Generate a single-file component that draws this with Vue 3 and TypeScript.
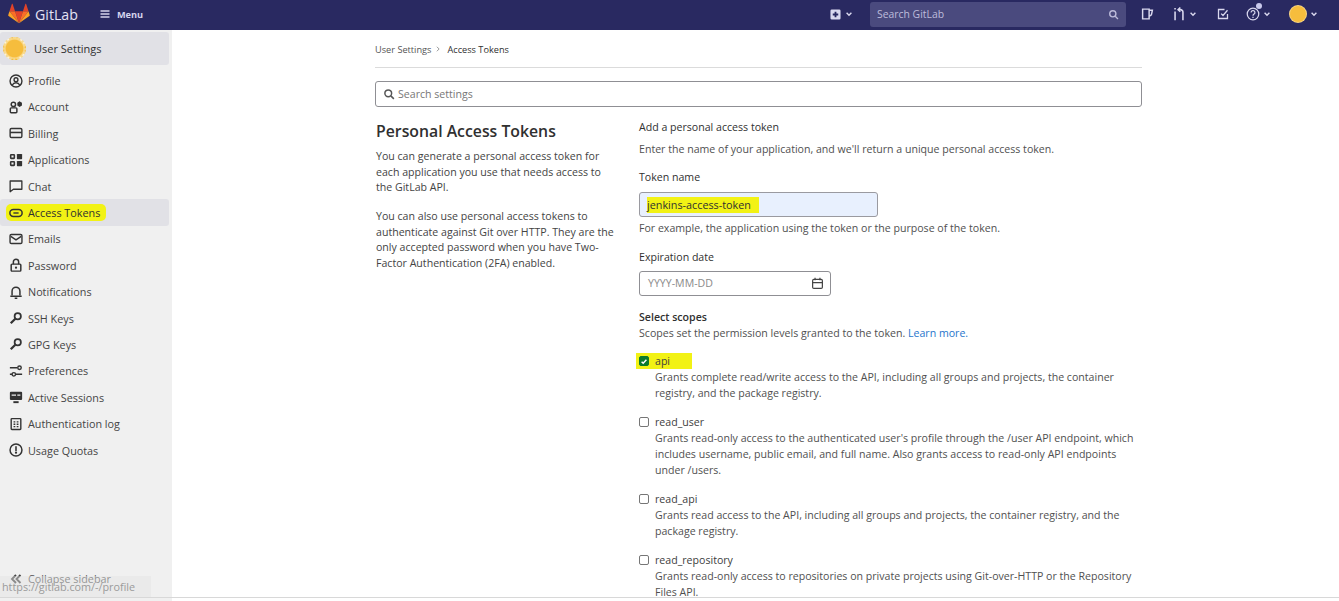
<template>
  <div class="page">
    <header class="topbar">
      <div class="brand">
        <svg class="tanuki" viewBox="0 0 24 24" width="22" height="22">
          <path fill="#e24329" d="M12 22 L16.3 9 H7.7 Z" />
          <path fill="#fc6d26" d="M12 22 L7.7 9 H1.6 Z" />
          <path fill="#fca326" d="M1.6 9 L0.3 13 C0.2 13.5 0.3 14 0.7 14.3 L12 22 Z" />
          <path fill="#e24329" d="M1.6 9 H7.7 L5.1 1.2 C4.9 .8 4.4 .8 4.2 1.2 Z" />
          <path fill="#fc6d26" d="M12 22 L16.3 9 H22.4 Z" />
          <path fill="#fca326" d="M22.4 9 L23.7 13 C23.8 13.5 23.7 14 23.3 14.3 L12 22 Z" />
          <path fill="#e24329" d="M22.4 9 H16.3 L18.9 1.2 C19.1 .8 19.6 .8 19.8 1.2 Z" />
        </svg>
        <span class="brand-name">GitLab</span>
        <button type="button" class="menu-btn">
          <svg viewBox="0 0 16 16" width="12" height="12" fill="#d5d4ec"><path d="M2 3h12v2H2zM2 7h12v2H2zM2 11h12v2H2z" /></svg>
          <span>Menu</span>
        </button>
      </div>
      <div class="top-right">
        <span class="top-icon new-btn">
          <svg viewBox="0 0 12 12" width="11" height="11"><path fill="#d9d8ee" fill-rule="evenodd" d="M2 0.5h8a1.5 1.5 0 0 1 1.5 1.5v8a1.5 1.5 0 0 1-1.5 1.5H2A1.5 1.5 0 0 1 .5 10V2A1.5 1.5 0 0 1 2 .5zM5 3v2H3v2h2v2h2V7h2V5H7V3z" /></svg>
          <svg class="chev" viewBox="0 0 10 10" width="8" height="8"><path d="M2 3.5l3 3 3-3" /></svg>
        </span>
        <div class="top-search">
          <span>Search GitLab</span>
          <svg viewBox="0 0 16 16" width="11" height="11" fill="none" stroke="#bdbcdb" stroke-width="2"><circle cx="7" cy="7" r="4.5" /><path d="M10.5 10.5L14.5 14.5" /></svg>
        </div>
        <div class="top-actions">
          <svg class="a1" viewBox="0 0 16 16" width="13" height="14" fill="none" stroke="#d9d8ee" stroke-width="1.8"><path d="M2 2h8v12H2zM10 3.5h4l-1.2 5.5L10 11" /></svg>
          <span class="a2">
            <svg viewBox="0 0 16 16" width="14" height="14" fill="none" stroke="#d9d8ee" stroke-width="1.8"><path d="M3.5 5v10" /><path d="M3.5 1v1.8" /><path d="M12.5 15V6a3 3 0 0 0-3-3H7.5" /><path d="M9.5 .6L7 3l2.5 2.4" /></svg>
            <svg class="chev" viewBox="0 0 10 10" width="8" height="8"><path d="M2 3.5l3 3 3-3" /></svg>
          </span>
          <svg class="a3" viewBox="0 0 16 16" width="12" height="12" fill="none" stroke="#d9d8ee" stroke-width="1.7"><path d="M14 8v6H2V2h8M5.5 7.5L8 10l6-7" /></svg>
          <span class="a4">
            <svg viewBox="0 0 16 16" width="14" height="14" fill="none" stroke="#d9d8ee" stroke-width="1.4"><circle cx="8" cy="8" r="6.6" /><path d="M5.8 6.2a2.2 2.2 0 1 1 3.4 1.9C8.4 8.7 8 9 8 10" /><path d="M8 11.2v1.4" /></svg>
            <i class="dot"></i>
            <svg class="chev" viewBox="0 0 10 10" width="8" height="8"><path d="M2 3.5l3 3 3-3" /></svg>
          </span>
          <span class="a5">
            <i class="top-avatar"></i>
            <svg class="chev" viewBox="0 0 10 10" width="8" height="8"><path d="M2 3.5l3 3 3-3" /></svg>
          </span>
        </div>
      </div>
    </header>

    <div class="body">
      <aside class="sidebar">
        <div class="side-head">
          <i class="side-avatar"></i>
          <span>User Settings</span>
        </div>
        <nav class="side-nav">
          <a v-for="item in navItems" :key="item.label" class="side-link" :class="{ active: item.active }">
            <span class="link-inner">
              <svg viewBox="0 0 16 16" width="14" height="14" class="side-icon" v-html="item.icon"></svg>
              <span class="link-text">{{ item.label }}</span>
            </span>
          </a>
        </nav>
        <div class="collapse">
          <svg viewBox="0 0 12 12" width="12" height="12" fill="none" stroke="#444" stroke-width="1.9"><path d="M6 2L2 6l4 4M10.5 2l-4 4 4 4" /></svg>
          <span>Collapse sidebar</span>
        </div>
      </aside>

      <main class="content">
        <div class="crumbs">
          <span>User Settings</span>
          <svg viewBox="0 0 8 8" width="6" height="6" fill="none" stroke="#777" stroke-width="1"><path d="M2.5 1l3 3-3 3" /></svg>
          <span class="crumb-cur">Access Tokens</span>
        </div>

        <div class="settings-search">
          <svg viewBox="0 0 16 16" width="12" height="12" fill="none" stroke="#555" stroke-width="2"><circle cx="7" cy="7" r="4.5" /><path d="M10.5 10.5L14.5 14.5" /></svg>
          <span>Search settings</span>
        </div>

        <div class="columns">
          <section class="intro">
            <h4>Personal Access Tokens</h4>
            <p>You can generate a personal access token for each application you use that needs access to the GitLab API.</p>
            <p>You can also use personal access tokens to authenticate against Git over HTTP. They are the only accepted password when you have Two-Factor Authentication (2FA) enabled.</p>
          </section>

          <section class="form">
            <h5 class="form-title">Add a personal access token</h5>
            <p class="muted lead">Enter the name of your application, and we'll return a unique personal access token.</p>

            <label class="field-label">Token name</label>
            <div class="token-input"><span class="hl">jenkins-access-token</span></div>
            <p class="muted hint">For example, the application using the token or the purpose of the token.</p>

            <label class="field-label">Expiration date</label>
            <div class="date-input">
              <span class="date-text">YYYY-MM-DD</span>
              <svg viewBox="0 0 16 16" width="13" height="13" fill="none" stroke="#444" stroke-width="1.5"><rect x="2" y="3" width="12" height="11" rx="1.5" /><path d="M2 7h12M5 1v3M11 1v3" /></svg>
            </div>

            <label class="scopes-title">Select scopes</label>
            <p class="muted scopes-sub">Scopes set the permission levels granted to the token. <a>Learn more.</a></p>

            <div v-for="s in scopes" :key="s.name" class="scope">
              <div class="scope-row" :class="{ marked: s.checked }">
                <span class="check" :class="{ on: s.checked }">
                  <svg v-if="s.checked" viewBox="0 0 10 10" width="9" height="9" fill="none" stroke="#fff" stroke-width="1.8"><path d="M2 5.2l2 2 4-4.4" /></svg>
                </span>
                <span class="scope-name">{{ s.name }}</span>
              </div>
              <p class="muted scope-desc">{{ s.desc }}</p>
            </div>
          </section>
        </div>
      </main>
    </div>

    <div class="status-url">https://gitlab.com/-/profile</div>
  </div>
</template>

<script setup lang="ts">
interface NavItem { label: string; icon: string; active?: boolean }

const navItems: NavItem[] = [
  { label: 'Profile', icon: '<circle cx="8" cy="8" r="6.8" fill="none" stroke="#333" stroke-width="1.6"/><circle cx="8" cy="6.5" r="2.2" fill="none" stroke="#333" stroke-width="1.6"/><path d="M3.8 12.6c1-2 2.5-2.6 4.2-2.6s3.2.6 4.2 2.6" fill="none" stroke="#333" stroke-width="1.6"/>' },
  { label: 'Account', icon: '<circle cx="5" cy="5" r="2.5" fill="none" stroke="#333" stroke-width="1.7"/><rect x="1.5" y="9" width="7.5" height="5.5" rx="1" fill="none" stroke="#333" stroke-width="1.7"/><path d="M12 1.5l2.8 1.6v3.2L12 8 9.5 6.3V3.1z" fill="#333"/>' },
  { label: 'Billing', icon: '<rect x="1.3" y="2.8" width="13.4" height="10.4" rx="1.5" fill="none" stroke="#333" stroke-width="1.6"/><path d="M1.3 6.5h13.4v1.8H1.3z" fill="#333"/>' },
  { label: 'Applications', icon: '<g fill="none" stroke="#333" stroke-width="1.8"><rect x="1.9" y="1.9" width="4.2" height="4.2" rx=".6"/><rect x="1.9" y="9.9" width="4.2" height="4.2" rx=".6"/></g><rect x="9" y="1" width="6" height="6" rx=".8" fill="#333"/><rect x="9" y="9" width="6" height="6" rx=".8" fill="#333"/>' },
  { label: 'Chat', icon: '<path d="M1.3 2.3h13.4v9.4H5L1.3 14.5z" fill="none" stroke="#333" stroke-width="1.5" stroke-linejoin="round"/>' },
  { label: 'Access Tokens', active: true, icon: '<rect x="1" y="4" width="14" height="8" rx="4" fill="none" stroke="#333" stroke-width="1.7"/><path d="M5 7.2h6v1.6H5z" fill="#333"/>' },
  { label: 'Emails', icon: '<rect x="1.2" y="2.8" width="13.6" height="10.4" rx="1.5" fill="none" stroke="#333" stroke-width="1.6"/><path d="M2 5l6 4 6-4" fill="none" stroke="#333" stroke-width="1.6"/>' },
  { label: 'Password', icon: '<rect x="2.5" y="7" width="11" height="8" rx="1" fill="none" stroke="#333" stroke-width="1.7"/><path d="M5 7V4.3a3 3 0 0 1 6 0V7" fill="none" stroke="#333" stroke-width="1.7"/><circle cx="8" cy="11" r="1.3" fill="#333"/>' },
  { label: 'Notifications', icon: '<path d="M3.5 12V7a4.5 4.5 0 0 1 9 0v5" fill="none" stroke="#333" stroke-width="1.7"/><path d="M1.5 12h13v1.6h-13zM6.5 14.2h3V16h-3z" fill="#333"/>' },
  { label: 'SSH Keys', icon: keyIcon() },
  { label: 'GPG Keys', icon: keyIcon() },
  { label: 'Preferences', icon: '<path d="M1 4.2h8.5M1 11.8h2.5M8 11.8h7" fill="none" stroke="#333" stroke-width="1.7"/><circle cx="12" cy="4.2" r="2" fill="none" stroke="#333" stroke-width="1.6"/><circle cx="5.5" cy="11.8" r="2" fill="none" stroke="#333" stroke-width="1.6"/>' },
  { label: 'Active Sessions', icon: '<rect x="1" y="2" width="14" height="9.5" rx="1.2" fill="#333"/><path d="M3 5h5v1.5H3zM9.5 5h3.5v1.5H9.5z" fill="#eee"/><path d="M5 12.8h6V15H5z" fill="#333"/>' },
  { label: 'Authentication log', icon: '<rect x="2.5" y="1.8" width="11" height="12.4" rx=".8" fill="none" stroke="#333" stroke-width="1.6"/><path d="M5.2 4.8h2v1.6h-2zM8.8 4.8h2v1.6h-2zM5.2 7.5h2v1.6h-2zM8.8 7.5h2v1.6h-2zM5.2 10.2h2v1.6h-2zM8.8 10.2h2v1.6h-2z" fill="#333"/>' },
  { label: 'Usage Quotas', icon: '<circle cx="8" cy="8" r="6.8" fill="none" stroke="#333" stroke-width="1.7"/><path d="M7.1 3.6h1.8v5.4H7.1z" fill="#333"/><circle cx="8" cy="11" r="1.3" fill="#333"/>' },
]

function keyIcon(): string {
  return '<circle cx="10" cy="6" r="3.6" fill="none" stroke="#333" stroke-width="2"/><path d="M7.2 8.8L2 14" fill="none" stroke="#333" stroke-width="2.6"/>'
}

const scopes = [
  { name: 'api', checked: true, desc: 'Grants complete read/write access to the API, including all groups and projects, the container registry, and the package registry.' },
  { name: 'read_user', checked: false, desc: "Grants read-only access to the authenticated user's profile through the /user API endpoint, which includes username, public email, and full name. Also grants access to read-only API endpoints under /users." },
  { name: 'read_api', checked: false, desc: 'Grants read access to the API, including all groups and projects, the container registry, and the package registry.' },
  { name: 'read_repository', checked: false, desc: 'Grants read-only access to repositories on private projects using Git-over-HTTP or the Repository Files API.' },
]
</script>

<style>
html, body { margin: 0; height: 100%; overflow: hidden; background: #fff; }
</style>

<style scoped>
.page {
  position: relative;
  height: 601px;
  overflow: hidden;
  font-family: "Open Sans", "Noto Sans", sans-serif;
  font-size: 10.6px;
  color: #303030;
}
.topbar {
  height: 30px;
  background: #292961;
  display: flex;
  justify-content: space-between;
  align-items: center;
  padding: 0 0 2px 8px;
  box-sizing: border-box;
}
.brand { display: flex; align-items: center; }
.brand-name { color: #e4e3f4; font-size: 14.2px; margin-left: 5px; }
.menu-btn {
  display: flex; align-items: center; gap: 6px;
  margin-left: 21px; padding: 0; border: 0; background: none;
  color: #d5d4ec; font: 700 9.2px "Open Sans", sans-serif;
}
.top-right { display: flex; align-items: center; }
.top-icon { display: flex; align-items: center; }
.new-btn { margin-right: 17px; gap: 4px; }
.chev { fill: none; stroke: #d9d8ee; stroke-width: 1.8; }
.top-search {
  width: 256px; height: 25px;
  background: #4a4a7e; border-radius: 3px;
  display: flex; align-items: center; justify-content: space-between;
  padding: 0 7px; box-sizing: border-box;
  color: #bdbcdb; font-size: 10.4px;
}
.top-actions { display: flex; align-items: center; margin-left: 15px; width: 198px; }
.a1 { margin-right: 18px; }
.a2, .a4, .a5 { display: flex; align-items: center; position: relative; gap: 3px; }
.a2 { margin-right: 20px; }
.a3 { margin-right: 17px; }
.a5 { margin-left: 18px; gap: 3px; }
.dot {
  position: absolute; left: 10px; top: -4px;
  width: 6px; height: 6px; border-radius: 50%; background: #c9c9ec;
}
.top-avatar {
  display: block; width: 18px; height: 18px; border-radius: 50%;
  background: radial-gradient(circle, #f6bd3d 0 58%, #fff1cf 78%);
}
.body { display: flex; height: 571px; }
.sidebar {
  width: 172px; flex: none;
  background: #f0f0f0;
  display: flex; flex-direction: column;
  padding-top: 2px;
  box-sizing: border-box;
  position: relative;
}
.side-head {
  width: 169px; height: 33px;
  background: #e1e1e6; border-radius: 3px;
  display: flex; align-items: center; gap: 8px;
  font-size: 11px; color: #303030;
  padding-left: 3px; box-sizing: border-box;
}
.side-avatar {
  display: block; width: 23px; height: 23px; border-radius: 50%; box-sizing: border-box;
  border: 2px dotted #f7d98a;
  background: radial-gradient(circle, #f6bd3d 0 62%, #fff3d6 80%);
}
.side-nav { display: flex; flex-direction: column; margin-top: 2.4px; }
.side-link {
  display: flex; align-items: center;
  width: 169px; height: 26.4px;
  padding-left: 6px; box-sizing: border-box;
  color: #444; border-radius: 3px;
  font-size: 10.8px;
}
.side-link.active { background: #e1e1e6; color: #303030; }
.link-inner { display: inline-flex; align-items: center; gap: 5px; height: 17px; }
.side-link.active .link-inner { background: #f2f215; border-radius: 5px; padding-right: 6px; }
.side-link .side-icon { margin-left: 3px; flex: none; }
.collapse {
  position: absolute; left: 10px; top: 541px;
  display: flex; align-items: center; gap: 6px;
  color: #555; font-size: 10.8px;
}
.content { width: 767px; margin-left: 203px; }
.crumbs {
  height: 34.5px; padding-top: 2px; border-bottom: 1px solid #dbdbdb;
  display: flex; align-items: center; gap: 4px;
  font-size: 9.2px; color: #555;
}
.crumb-cur { color: #303030; margin-left: 2px; }
.settings-search {
  height: 26px; margin-top: 13.5px;
  border: 1px solid #8f8f94; border-radius: 3px;
  display: flex; align-items: center; gap: 3px;
  padding-left: 7px; box-sizing: border-box;
  color: #777; font-size: 10.6px;
}
.columns { display: flex; }
.intro { width: 264px; flex: none; padding: 0 24px 0 1px; box-sizing: border-box; }
.intro h4 { margin: 13px 0 7px; font-size: 15.8px; font-weight: 600; color: #303030; line-height: 22px; white-space: nowrap; }
.intro p { margin: 0 0 13.5px; line-height: 15.5px; color: #444; }
.form { flex: 1; padding-top: 13px; }
.form-title { margin: 0; font-size: 10.6px; font-weight: 500; line-height: 14px; color: #303030; }
.muted { color: #505050; margin: 0; }
.lead { margin-top: 8px; line-height: 14px; }
.field-label { display: block; margin-top: 14px; line-height: 14px; font-size: 10.6px; font-weight: 500; color: #303030; }
.token-input {
  margin-top: 8px; width: 239px; height: 25px;
  background: #e8f0fe; border: 1px solid #9a9aa0; border-radius: 3px;
  display: flex; align-items: center; padding-left: 7px; box-sizing: border-box;
  font-size: 10.8px; color: #303030;
}
.hl { background: #f2f215; padding: 0 8px 0 0; line-height: 16px; }
.hint { margin-top: 4px; line-height: 14px; }
.token-input + .hint + .field-label { margin-top: 15px; }
.date-input {
  margin-top: 7px; width: 192px; height: 25px;
  border: 1px solid #8f8f94; border-radius: 3px;
  display: flex; align-items: center; justify-content: space-between;
  padding: 0 6px 0 8px; box-sizing: border-box;
  color: #8a8a8a; font-size: 10.6px;
}
.date-text { margin-bottom: 1px; }
.scopes-title { display: block; margin-top: 14px; line-height: 14px; font-size: 10.6px; font-weight: 600; color: #303030; }
.scopes-sub { line-height: 14px; margin-top: 2px; margin-bottom: 13px; }
.scopes-sub a { color: #1f75cb; }
.scope { margin-bottom: 12.1px; }
.scope-row { display: flex; align-items: center; height: 16px; gap: 6px; }
.scope-row.marked { width: 53px; background: #f2f215; margin-left: -3px; padding-left: 3px; }
.check {
  width: 10px; height: 10px; flex: none; box-sizing: border-box;
  border: 1px solid #767676; border-radius: 2px; background: #fff;
  display: flex; align-items: center; justify-content: center;
}
.check.on { background: #0c7a2c; border-color: #0c7a2c; }
.scope-name { color: #404040; font-size: 10.6px; }
.scope-desc { margin-left: 16px; line-height: 15.9px; margin-top: 1px; }
.status-url {
  position: absolute; left: 0; bottom: 4px;
  background: rgba(226, 226, 226, .45); color: #9a9a9a;
  height: 21px; line-height: 22px; padding: 0 6px 0 2px;
  font-size: 10.8px; width: 143px; white-space: nowrap;
}
.page::after {
  content: ""; position: absolute; left: 0; right: 0; bottom: 3px;
  height: 1px; background: #d8d8d8;
}
</style>
